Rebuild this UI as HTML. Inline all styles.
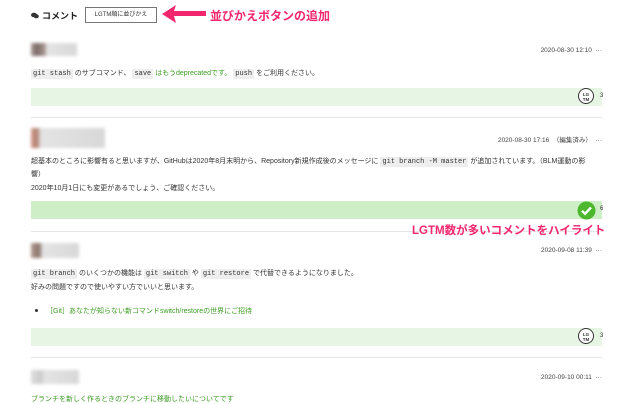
<!DOCTYPE html>
<html><head><meta charset="utf-8"><style>
*{margin:0;padding:0;box-sizing:border-box}
body{width:640px;height:400px;overflow:hidden;background:#fff;position:relative;font-family:"Liberation Sans","Noto Sans CJK JP",sans-serif;color:#333}
.a{position:absolute;white-space:nowrap}
.t{font-size:7px;color:#333}
.d{font-size:6.5px;color:#444;right:38px}
code{font-family:"Liberation Mono",monospace;background:#eee;padding:1px 2px;font-size:7px}
.g{color:#3a9a22}
.bar{position:absolute;left:31px;width:571px}
.hr{position:absolute;left:31px;width:571px;height:1px;background:#e4e4e4}
.av{position:absolute;left:31px;height:14px;filter:blur(1.5px)}
.lg{position:absolute;width:16px;height:16px;border:1px solid #333;border-radius:50%;background:#fff;font-size:4.5px;line-height:5px;text-align:center;padding-top:3px;font-weight:bold}
.pk{position:absolute;color:#f2276e;font-weight:bold;white-space:nowrap;text-shadow:0 0 2px #fff}
</style></head><body>
<svg class="a" style="left:31px;top:12px" width="8" height="7" viewBox="0 0 8 7"><ellipse cx="3" cy="3" rx="3" ry="2.3" fill="#333"/><ellipse cx="5.3" cy="4.3" rx="2.5" ry="2" fill="#333"/></svg>
<div class="a" style="left:42px;top:9px;font-size:9px;font-weight:bold;color:#222">コメント</div>
<div class="a" style="left:85px;top:7px;width:72px;height:16px;border:1px solid #777;font-size:6px;line-height:14px;text-align:center;color:#333">LGTM順に並びかえ</div>
<svg class="a" style="left:162px;top:4px" width="46" height="20" viewBox="0 0 46 20"><polygon points="0,10 14,1 12,7 44,7 44,12 12,12 14,19" fill="#f2276e"/></svg>
<div class="pk" style="left:210px;top:7px;font-size:12px">並びかえボタンの追加</div>

<div class="av" style="width:46px;background:linear-gradient(90deg,#aa9a96 0,#7b6a65 6px,#aa9a96 14px,#e4e4e4 16px,#d8d8d8 46px);top:43px;height:13px"></div>
<div class="a d" style="top:47px">2020-08-30 12:10 &nbsp;···</div>
<div class="a t" style="left:31px;top:68px"><code>git stash</code> のサブコマンド、 <code>save</code> <span class="g">はもうdeprecatedです。</span> <code>push</code> をご利用ください。</div>
<div class="bar" style="top:88px;height:18px;background:#e6f5e4"></div>
<div class="lg" style="left:578px;top:88px">LG<br>TM</div>
<div class="a t" style="left:600px;top:93px;font-size:6px">3</div>
<div class="hr" style="top:117px"></div>

<div class="av" style="width:74px;background:linear-gradient(90deg,#d49a8a 0,#b08070 6px,#e4e4e4 10px,#d8d8d8 74px);top:128px;height:20px"></div>
<div class="a d" style="top:134px">2020-08-30 17:16 &nbsp;（編集済み） &nbsp;···</div>
<div class="a t" style="left:31px;top:156px">超基本のところに影響有ると思いますが、GitHubは2020年8月末明から、Repository新規作成後のメッセージに <code>git branch -M master</code> が追加されています。（BLM運動の影</div>
<div class="a t" style="left:31px;top:169px">響）</div>
<div class="a t" style="left:31px;top:183px">2020年10月1日にも変更があるでしょう、ご確認ください。</div>
<div class="bar" style="top:201px;height:18px;background:#cdeec6"></div>
<svg class="a" style="left:577px;top:201px" width="19" height="19" viewBox="0 0 19 19"><circle cx="9.5" cy="9.5" r="9" fill="#4db82d"/><path d="M5 9.8l3 3 6-6.3" stroke="#fff" stroke-width="2.4" fill="none"/></svg>
<div class="a t" style="left:600px;top:206px;font-size:6px">6</div>
<div class="hr" style="top:231px"></div>
<div class="pk" style="left:412px;top:222px;font-size:11.5px">LGTM数が多いコメントをハイライト</div>

<div class="av" style="width:48px;background:linear-gradient(90deg,#b09a90 0,#8a756c 8px,#e4e4e4 12px,#d8d8d8 48px);top:243px;height:15px"></div>
<div class="a d" style="top:247px">2020-09-08 11:39 &nbsp;···</div>
<div class="a t" style="left:31px;top:268px"><code>git branch</code> のいくつかの機能は <code>git switch</code> や <code>git restore</code> で代替できるようになりました。</div>
<div class="a t" style="left:31px;top:282px">好みの問題ですので使いやすい方でいいと思います。</div>
<div class="a" style="left:35px;top:309px;width:3px;height:3px;background:#333;border-radius:50%"></div>
<div class="a t g" style="left:46px;top:306px">［Git］あなたが知らない新コマンドswitch/restoreの世界にご招待</div>
<div class="bar" style="top:328px;height:18px;background:#e6f5e4"></div>
<div class="lg" style="left:578px;top:328px">LG<br>TM</div>
<div class="a t" style="left:600px;top:333px;font-size:6px">3</div>
<div class="hr" style="top:357px"></div>

<div class="av" style="width:48px;background:linear-gradient(90deg,#ddd 0,#ccc 10px,#e4e4e4 14px,#d8d8d8 48px);top:370px;height:14px"></div>
<div class="a d" style="top:374px">2020-09-10 00:11 &nbsp;···</div>
<div class="a t g" style="left:31px;top:394px">ブランチを新しく作るときのブランチに移動したいについてです</div>
</body></html>
